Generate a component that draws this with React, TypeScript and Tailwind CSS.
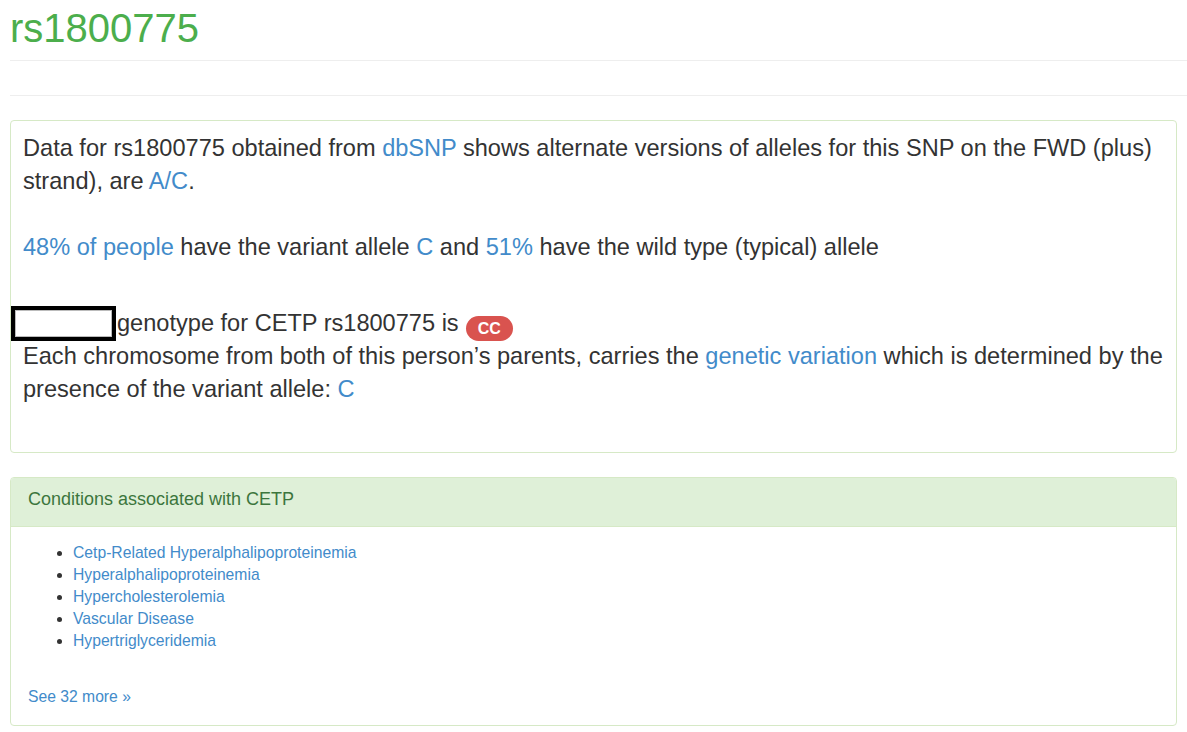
const conditions = [
  'Cetp-Related Hyperalphalipoproteinemia',
  'Hyperalphalipoproteinemia',
  'Hypercholesterolemia',
  'Vascular Disease',
  'Hypertriglyceridemia',
];

function A({ children }: { children: React.ReactNode }) {
  return (
    <a href="#" className="text-[#428bca] no-underline">
      {children}
    </a>
  );
}

export default function App() {
  return (
    <div className="min-h-[732px] bg-white pl-[10px] font-['Liberation_Sans',Arial,sans-serif] text-[#333]">
      <h1 className="mt-[6px] text-[40px] leading-[44px] font-normal text-[#4cae4c]">rs1800775</h1>

      {/* separators */}
      <div className="mt-[10px] border-t border-[#eee]" />
      <div className="mt-[34px] border-t border-[#eee]" />

      {/* genotype panel */}
      <div className="mt-[24px] mr-[10px] h-[333px] rounded-[4px] border border-[#d6e9c6] pt-[11px] pl-[12px] pr-[4px] text-[23.58px] leading-[33px]">
        <p>
          Data for rs1800775 obtained from <A>dbSNP</A> shows alternate versions of alleles for this SNP on the FWD
          (plus) strand), are <A>A/C</A>.
        </p>
        <p className="mt-[33px]">
          <A>48% of people</A> have the variant allele <A>C</A> and <A>51%</A> have the wild type (typical) allele
        </p>

        <div className="mt-[43px] flex h-[33px] items-start">
          <div className="-ml-[12px] -mt-[1px] h-[35px] w-[105px] shrink-0 border-[4px] border-black bg-white">
            <div className="h-full w-full border border-[#bbb]" />
          </div>
          <span className="ml-px whitespace-nowrap">genotype for CETP rs1800775 is</span>
          <span className="ml-[7px] mt-[9px] h-[25px] rounded-full bg-[#d9534f] px-[12px] text-[16px] leading-[25px] font-bold text-white">
            CC
          </span>
        </div>
        <p>
          Each chromosome from both of this person’s parents, carries the <A>genetic variation</A> which is
          determined by the presence of the variant allele: <A>C</A>
        </p>
      </div>

      {/* conditions panel */}
      <div className="mt-[24px] mr-[10px] rounded-[4px] border border-[#d6e9c6]">
        <div className="h-[49px] rounded-t-[3px] border-b border-[#d6e9c6] bg-[#dff0d8] px-[17px] pt-[9px] text-[18px] leading-[25px] text-[#3c763d]">
          Conditions associated with CETP
        </div>
        <div className="px-[17px] pt-[15px] pb-[17px] text-[15.7px] leading-[22px]">
          <ul className="list-disc pl-[45px]">
            {conditions.map((c) => (
              <li key={c}>
                <A>{c}</A>
              </li>
            ))}
          </ul>
          <p className="mt-[34px]">
            <A>See 32 more »</A>
          </p>
        </div>
      </div>
    </div>
  );
}
